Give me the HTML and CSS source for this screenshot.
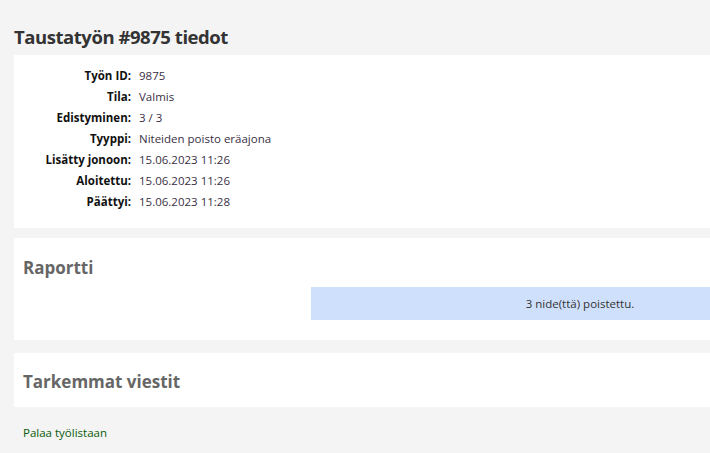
FILE: index.html
```html
<!DOCTYPE html>
<html lang="fi">
<head>
<meta charset="utf-8">
<title>Taustatyön #9875 tiedot</title>
<link rel="stylesheet" href="styles.css">
</head>
<body>
<main class="page">
  <h1 class="title">Taustatyön #9875 tiedot</h1>
  <section class="panel details">
    <dl class="info">
      <dt>Työn ID:</dt><dd>9875</dd>
      <dt>Tila:</dt><dd>Valmis</dd>
      <dt>Edistyminen:</dt><dd>3 / 3</dd>
      <dt>Tyyppi:</dt><dd>Niteiden poisto eräajona</dd>
      <dt>Lisätty jonoon:</dt><dd>15.06.2023 11:26</dd>
      <dt>Aloitettu:</dt><dd>15.06.2023 11:26</dd>
      <dt>Päättyi:</dt><dd>15.06.2023 11:28</dd>
    </dl>
  </section>
  <section class="panel report">
    <h2 class="subtitle">Raportti</h2>
    <div class="report-row">
      <div class="message">3 nide(ttä) poistettu.</div>
    </div>
  </section>
  <section class="panel messages">
    <h2 class="subtitle">Tarkemmat viestit</h2>
  </section>
  <a class="back" href="#">Palaa työlistaan</a>
</main>
</body>
</html>
```

FILE: styles.css
```css
html, body {
  margin: 0;
  padding: 0;
  background: #f3f4f3;
  overflow: hidden;
}
body {
  font-family: "Open Sans", "Noto Sans", sans-serif;
  font-size: 12px;
  color: #333;
}
.page {
  padding: 24px 0 0 14px;
}
.title {
  margin: 0 0 5px 0;
  font-size: 18.5px;
  line-height: 26px;
  font-weight: 700;
  color: #333;
  letter-spacing: -0.45px;
}
.panel {
  background: #fff;
}
.details {
  padding: 10px 0 0 0;
  height: 173px;
  box-sizing: border-box;
}
.info {
  display: grid;
  grid-template-columns: 117px 1fr;
  column-gap: 8px;
  row-gap: 0;
  margin: 0;
  line-height: 21px;
}
.info dt {
  text-align: right;
  font-weight: 700;
  color: #111;
  font-size: 11.5px;
}
.info dd {
  margin: 0;
  color: #3a2f45;
  font-size: 11.5px;
}
.report {
  margin-top: 10px;
  height: 102px;
  padding-top: 19px;
  box-sizing: border-box;
}
.subtitle {
  margin: 0;
  padding-left: 9px;
  font-size: 17px;
  line-height: 22px;
  font-weight: 700;
  color: #666;
}
.report-row {
  display: flex;
  padding-left: 297px;
  margin-top: 8px;
}
.message {
  flex: 1 1 auto;
  height: 33px;
  line-height: 33px;
  padding-left: 139px;
  background: #cfe0fc;
  text-align: center;
  color: #333;
  font-size: 11.5px;
}
.messages {
  margin-top: 13px;
  height: 54px;
  padding-top: 18px;
  box-sizing: border-box;
}
.back {
  display: inline-block;
  margin: 18px 0 0 9px;
  color: #0b5a0b;
  text-decoration: none;
  font-size: 11.5px;
}
```
